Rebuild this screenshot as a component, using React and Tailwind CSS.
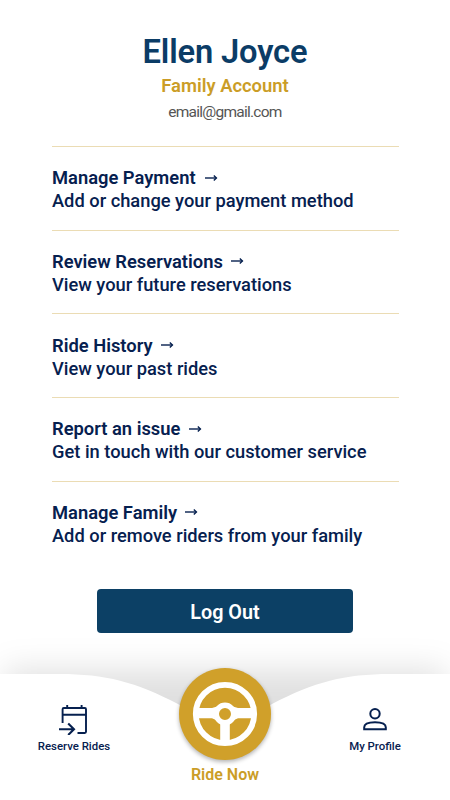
const menuItems = [
  { title: 'Manage Payment', text: 'Add or change your payment method', gap: 'gap-[9px]' },
  { title: 'Review Reservations', text: 'View your future reservations', gap: 'gap-2' },
  { title: 'Ride History', text: 'View your past rides', gap: 'gap-2' },
  { title: 'Report an issue', text: 'Get in touch with our customer service', gap: 'gap-[9px]' },
  { title: 'Manage Family', text: 'Add or remove riders from your family', gap: 'gap-2' },
];

function ArrowIcon() {
  return (
    <svg width="13" height="8" viewBox="0 0 13 8" fill="none" stroke="currentColor" strokeWidth="1.4">
      <path d="M0 4H11.4" />
      <path d="M8.8 1.6L11.4 4L8.8 6.4" />
    </svg>
  );
}

function ReserveIcon() {
  return (
    <svg width="28" height="30" viewBox="0 0 28 30" fill="none" stroke="currentColor" strokeWidth="1.9">
      <path d="M3.6 18V4.2Q3.6 3 4.8 3H25.8Q27 3 27 4.2V26.8Q27 28 25.8 28H18.5" />
      <path d="M3.6 9.7H27M8.2 0V3M22.6 0V3" />
      <path d="M0 24.2H14.5M9.2 18.4L15 24.2L9.2 30" strokeWidth="2.1" />
    </svg>
  );
}

function ProfileIcon() {
  return (
    <svg width="24" height="23" viewBox="0 0 24 23" fill="none" stroke="currentColor" strokeWidth="2">
      <circle cx="12" cy="5.7" r="4.7" />
      <path d="M1.2 21.3V19.2C1.2 15.8 5.8 14.2 12 14.2S22.8 15.8 22.8 19.2V21.3Z" />
    </svg>
  );
}

function WheelIcon() {
  return (
    <svg width="66" height="66" viewBox="0 0 66 66" fill="none" stroke="white">
      <circle cx="33" cy="33" r="29.2" strokeWidth="5.8" />
      <circle cx="33" cy="33" r="8.7" strokeWidth="5.4" />
      <g fill="white" stroke="none">
        <path d="M5 27H20L26 25.3L22.5 36L25 39.5L20 37.2H5Z" />
        <path d="M61 27H46L40 25.3L43.5 36L41 39.5L46 37.2H61Z" />
        <path d="M28.2 42H37.8V61H28.2Z" />
      </g>
    </svg>
  );
}

export default function App() {
  return (
    <div className="flex h-[800px] w-[450px] flex-col overflow-hidden bg-white font-['Roboto',sans-serif] text-[#06204f]">
      {/* Account */}
      <header className="flex h-[146px] flex-col items-center pt-[32px]">
        <h1 className="text-[32.7px] leading-[40px] font-semibold tracking-[-0.15px] text-[#0b3c66]">Ellen Joyce</h1>
        <p className="mt-[3px] text-[18.4px] leading-[22px] font-semibold text-[#cb9d27]">Family Account</p>
        <p className="mt-[5px] text-[15.5px] leading-[20px] tracking-[-0.75px] text-[#555]">email@gmail.com</p>
      </header>

      {/* Menu */}
      <main className="pr-[51px] pl-[52px]">
        {menuItems.map((item) => (
          <section key={item.title} className="h-[83.65px] border-t border-[#ebdcb4] pt-[19.3px]">
            <div className={`flex items-center ${item.gap}`}>
              <h2 className="text-[18.35px] leading-[23px] font-semibold">{item.title}</h2>
              <ArrowIcon />
            </div>
            <p className="text-[18.3px] leading-[23px] font-medium">{item.text}</p>
          </section>
        ))}
      </main>

      <div className="mt-[25px] flex justify-center">
        <button className="h-[44px] w-[256px] rounded-[4px] bg-[#0c4065] pt-[3px] text-[19.8px] font-semibold text-white">
          Log Out
        </button>
      </div>

      {/* Bottom navigation */}
      <nav className="relative mt-auto h-[166px] shrink-0">
        <svg className="absolute inset-0" width="450" height="166" viewBox="0 0 450 166">
          <defs>
            <filter id="nav-shadow" x="-10%" y="-60%" width="120%" height="220%">
              <feGaussianBlur stdDeviation="16" />
            </filter>
          </defs>
          <rect x="5" y="36" width="440" height="130" fill="black" fillOpacity="0.125" filter="url(#nav-shadow)" />
          <path
            d="M0 40H60C105 40 136 48 178 70C194 79 208 91 225 91C242 91 256 79 272 70C314 48 345 40 390 40H450V166H0Z"
            fill="white"
          />
        </svg>
        <div className="relative grid h-full grid-cols-3 text-[11.4px] leading-[14px] font-medium">
          <a href="#reserve" className="flex flex-col items-center gap-[4px] pt-[71px] pr-[2px] text-center">
            <span className="mr-[2px]">
              <ReserveIcon />
            </span>
            Reserve Rides
          </a>
          <a href="#ride" className="flex flex-col items-center pt-[33.5px] text-[#cb9d27]">
            <span className="flex size-[92px] items-center justify-center rounded-full bg-[#d0a02a] shadow-[0_2px_4px_rgba(0,0,0,0.3)]">
              <WheelIcon />
            </span>
            <span className="mt-[4px] text-[16px] leading-[22px] font-semibold">Ride Now</span>
          </a>
          <a href="#profile" className="flex flex-col items-center gap-[8px] pt-[74px]">
            <ProfileIcon />
            My Profile
          </a>
        </div>
      </nav>
    </div>
  );
}
